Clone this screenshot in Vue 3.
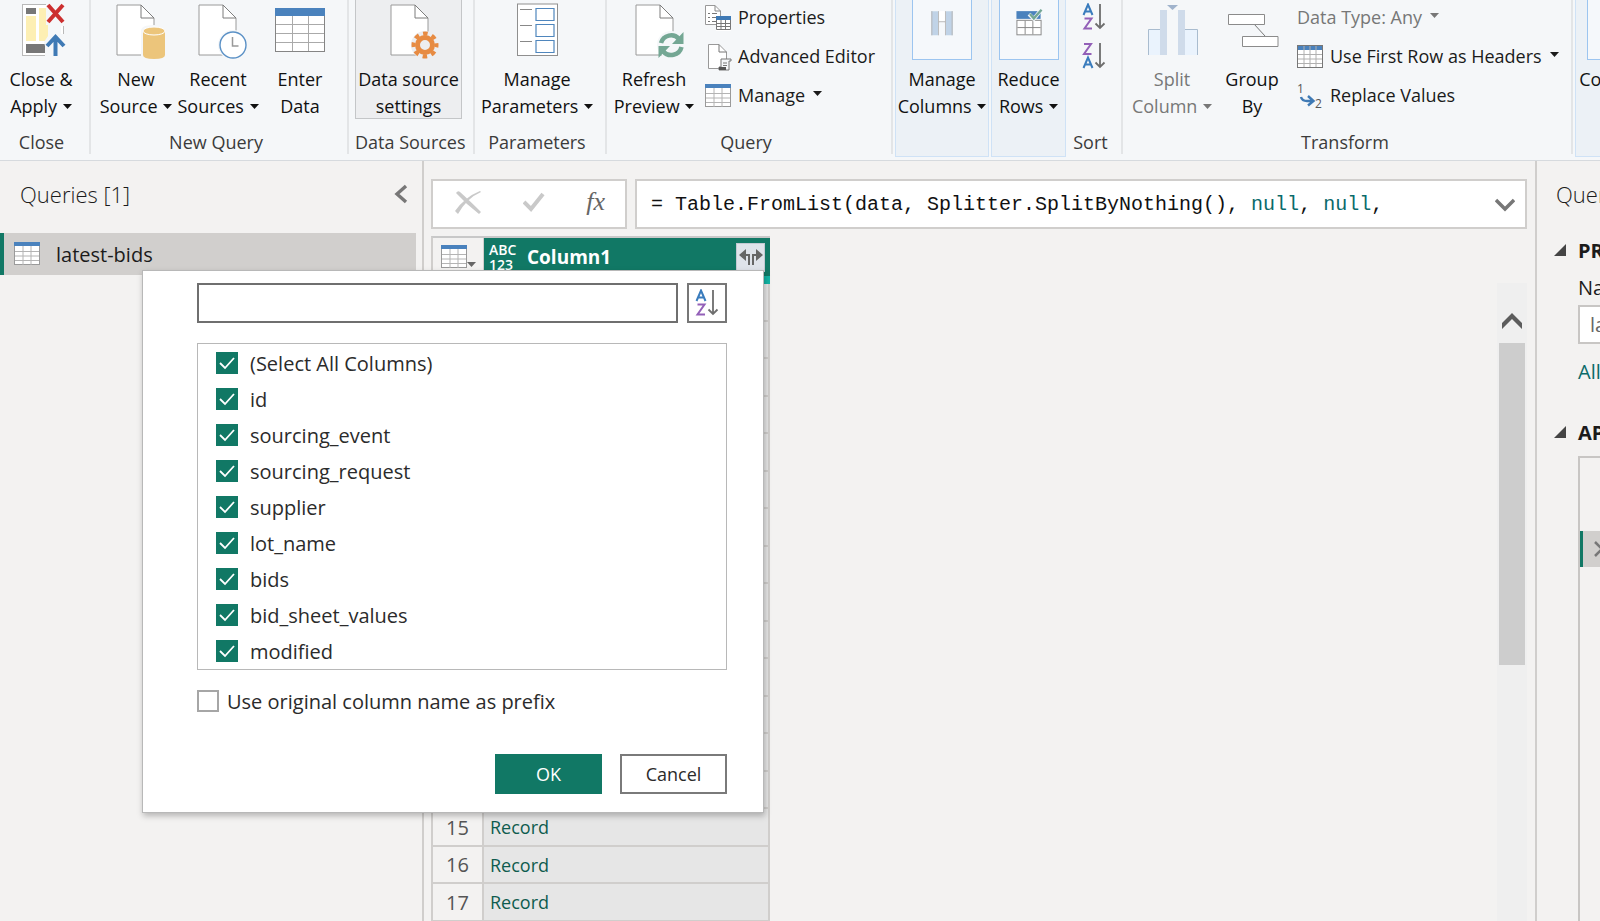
<script setup>
import { reactive, ref } from 'vue'

const columns = reactive([
  { name: '(Select All Columns)', on: true },
  { name: 'id', on: true },
  { name: 'sourcing_event', on: true },
  { name: 'sourcing_request', on: true },
  { name: 'supplier', on: true },
  { name: 'lot_name', on: true },
  { name: 'bids', on: true },
  { name: 'bid_sheet_values', on: true },
  { name: 'modified', on: true },
])
const search = ref('')
const prefix = ref(false)
const queryName = ref('latest-bids')
</script>

<template>
  <div class="app">
    <svg class="defs" aria-hidden="true">
      <symbol id="caret" viewBox="0 0 9 5"><path d="M0 0H9L4.5 5Z" fill="currentColor" /></symbol>
      <symbol id="doc" viewBox="0 0 40 52">
        <path d="M1 1H25L38 14V51H1Z" fill="#fff" stroke="#9a9a9a" />
        <path d="M25 1V14H38Z" fill="#fff" stroke="#7d7d7d" />
      </symbol>
      <symbol id="grid" viewBox="0 0 26 24">
        <rect x=".5" y=".5" width="25" height="22" fill="#fff" stroke="#9a9a9a" />
        <path d="M9 4V23M17 4V23M1 9.500H25M1 14H25M1 18.500H25" stroke="#b4b4b4" fill="none" />
        <rect width="26" height="4" fill="#4a82bd" />
      </symbol>
      <symbol id="az" viewBox="0 0 24 28">
        <path d="M1.500 12L6 1.500L10.500 12M3 8.500H9" fill="none" stroke="#3a7cbd" stroke-width="2" />
        <path d="M2.500 15.500H9.500L2.500 25.500H10" fill="none" stroke="#9360b8" stroke-width="2" />
        <path d="M18 1V25M13.500 20.500L18 25L22.500 20.500" fill="none" stroke="#6d6d6d" stroke-width="1.800" />
      </symbol>
      <symbol id="za" viewBox="0 0 24 28">
        <path d="M2 2H9L2 12H9.500" fill="none" stroke="#9360b8" stroke-width="2" />
        <path d="M1.500 26L6 15.500L10.500 26M3 22.500H9" fill="none" stroke="#3a7cbd" stroke-width="2" />
        <path d="M18 1V25M13.500 20.500L18 25L22.500 20.500" fill="none" stroke="#6d6d6d" stroke-width="1.800" />
      </symbol>
    </svg>

    <header class="ribbon">
      <section class="group g-close">
        <div class="tools">
          <button class="big">
            <svg class="icon" viewBox="0 0 60 60">
              <rect x="11.500" y="4.500" width="41" height="51" fill="#fff" stroke="#b9b9b9" />
              <rect x="15" y="8" width="10" height="6" fill="#777" />
              <rect x="15" y="16" width="10" height="25" fill="#fdefb3" />
              <rect x="28" y="8" width="20" height="33" fill="#fdefb3" />
              <rect x="15" y="44" width="19" height="9" fill="#777" />
              <path d="M35 0H58V26H50V34H56V60H34V46L33 42L37 36V25H35Z" fill="#f5f7f9" />
              <path d="M37 5L52 22M52 5L37 22" stroke="#cc2f2f" stroke-width="4" />
              <path d="M44.500 56V38M36 46L44.500 37L53 46" stroke="#3f7ab5" stroke-width="4" fill="none" />
            </svg>
            <span>Close &amp;<br />Apply <svg class="caret"><use href="#caret" /></svg></span>
          </button>
        </div>
        <h2>Close</h2>
      </section>

      <section class="group g-new">
        <div class="tools">
          <button class="big">
            <svg class="icon" viewBox="0 0 60 60">
              <use href="#doc" x="10" y="4" width="40" height="52" />
              <path d="M35 31Q35 25 48 25Q61 25 61 31V60H35Z" fill="#f5f7f9" />
              <path d="M37 31V55Q37 59 48 59Q59 59 59 55V31Z" fill="#ecc57b" />
              <ellipse cx="48" cy="31" rx="11" ry="4" fill="#ecc57b" stroke="#fff" />
            </svg>
            <span>New<br />Source <svg class="caret"><use href="#caret" /></svg></span>
          </button>
          <button class="big">
            <svg class="icon" viewBox="0 0 60 60">
              <use href="#doc" x="10" y="4" width="40" height="52" />
              <circle cx="45" cy="45" r="15" fill="#f5f7f9" />
              <circle cx="45" cy="45" r="13" fill="#fff" stroke="#5b91c6" stroke-width="1.400" />
              <path d="M44.500 37V46H50.500" fill="none" stroke="#999" stroke-width="1.500" />
            </svg>
            <span>Recent<br />Sources <svg class="caret"><use href="#caret" /></svg></span>
          </button>
          <button class="big">
            <svg class="icon" viewBox="0 0 60 60">
              <rect x="5.500" y="8.500" width="49" height="43" fill="#fff" stroke="#858585" />
              <path d="M22.500 16V51M38.500 16V51M6 24.500H54M6 33.500H54M6 42.500H54" stroke="#aaa" />
              <rect x="5" y="8" width="50" height="8" fill="#4a82bd" />
            </svg>
            <span>Enter<br />Data</span>
          </button>
        </div>
        <h2>New Query</h2>
      </section>

      <section class="group g-sources">
        <div class="tools">
          <button class="big active">
            <svg class="icon" viewBox="0 0 60 60">
              <use href="#doc" x="11" y="4" width="40" height="52" />
              <circle cx="46" cy="45" r="14" fill="#edeef0" />
              <circle cx="46" cy="45" r="7.500" fill="none" stroke="#e78b42" stroke-width="5" />
              <circle cx="46" cy="45" r="11.500" fill="none" stroke="#e78b42" stroke-width="4" stroke-dasharray="4.600 4.432" stroke-dashoffset="2.300" />
            </svg>
            <span>Data source<br />settings</span>
          </button>
        </div>
        <h2>Data Sources</h2>
      </section>

      <section class="group g-params">
        <div class="tools">
          <button class="big">
            <svg class="icon" viewBox="0 0 60 60">
              <rect x="10.500" y="4" width="40" height="51.500" fill="#fff" stroke="#8f8f8f" />
              <path d="M13 9.500H25M13 25.500H25M13 41.500H25" stroke="#888" />
              <path d="M29 8.500H47V20.500H29ZM29 24.500H47V36.500H29ZM29 40.500H47V52.500H29Z" fill="#fff" stroke="#4f86bd" stroke-width="1.200" />
            </svg>
            <span>Manage<br />Parameters <svg class="caret"><use href="#caret" /></svg></span>
          </button>
        </div>
        <h2>Parameters</h2>
      </section>

      <section class="group g-query">
        <div class="tools">
          <button class="big">
            <svg class="icon" viewBox="0 0 60 60">
              <use href="#doc" x="11" y="4" width="40" height="52" />
              <circle cx="47" cy="45" r="14" fill="#f5f7f9" />
              <path d="M37 43A10.500 10.500 0 0 1 55 39M57.500 47A10.500 10.500 0 0 1 39 51" fill="none" stroke="#74a794" stroke-width="4.500" />
              <path d="M59.500 32V44H48ZM34.500 58V46H46Z" fill="#74a794" />
            </svg>
            <span>Refresh<br />Preview <svg class="caret"><use href="#caret" /></svg></span>
          </button>
          <div class="stack">
            <button class="small">
              <svg class="mini" viewBox="0 0 26 26">
                <path d="M.5 .5H10L15.500 6V19.500H.5Z" fill="#fff" stroke="#999" />
                <path d="M10 .5V6H15.500" fill="none" stroke="#888" />
                <path d="M3 8.500H5M3 12.500H5M3 16.500H5M7 8.500H12M7 12.500H11M7 16.500H11" stroke="#777" />
                <rect x="11" y="11" width="15" height="15" fill="#fff" />
                <path d="M11.500 12V24.500H25.500V12M16 15V24M20.500 15V24M12 18.500H25M12 21.500H25" fill="none" stroke="#777" />
                <rect x="11" y="11" width="15" height="4" fill="#3f7ab5" />
              </svg>
              Properties
            </button>
            <button class="small">
              <svg class="mini" viewBox="0 0 26 26">
                <path d="M3.500 .5H14L21.500 8V24.500H3.500Z" fill="#fff" stroke="#999" />
                <path d="M14 .5V8H21.500" fill="none" stroke="#777" />
                <path d="M16 15H26V17H24V26H14V23H16Z" fill="#f5f7f9" stroke="#777" />
                <path d="M18 19H22M18 21.500H22" stroke="#777" />
                <path d="M14 24.500H21" stroke="#555" stroke-width="3" />
              </svg>
              Advanced Editor
            </button>
            <button class="small">
              <svg class="mini" viewBox="0 0 26 24"><use href="#grid" /></svg>
              Manage <svg class="caret"><use href="#caret" /></svg>
            </button>
          </div>
        </div>
        <h2>Query</h2>
      </section>

      <section class="folded f-columns">
        <button class="big">
          <svg class="icon framed" viewBox="0 0 60 60">
            <path d="M19 11H26V36H19ZM34 11H41V36H34Z" fill="#c0d3e7" />
            <path d="M19.500 11V36M40.500 11V36M26.500 36V11M33.500 36V11M26.500 22H33.500" fill="none" stroke="#b3b3b3" />
            <path d="M27 11H33V21H27Z" fill="#fff" />
            <path d="M27 23H33V37H27Z" fill="#f5f8fb" />
          </svg>
          <span>Manage<br />Columns <svg class="caret"><use href="#caret" /></svg></span>
        </button>
      </section>
      <section class="folded f-rows">
        <button class="big">
          <svg class="icon framed" viewBox="0 0 60 60">
            <rect x="17.500" y="20.500" width="25" height="15" fill="#fff" stroke="#888" />
            <path d="M26 21V35M34 21V35M18 28H42" stroke="#888" />
            <rect x="17" y="11" width="25" height="8" fill="#4a82bd" />
            <path d="M30 14L35 19L43 9" fill="none" stroke="#f1f5f9" stroke-width="4" />
            <path d="M31 14L35 18.500L43 9.500" fill="none" stroke="#74a794" stroke-width="2.400" />
          </svg>
          <span>Reduce<br />Rows <svg class="caret"><use href="#caret" /></svg></span>
        </button>
      </section>

      <section class="group g-sort">
        <div class="tools sorts">
          <button aria-label="Sort ascending"><svg class="az"><use href="#az" /></svg></button>
          <button aria-label="Sort descending"><svg class="az"><use href="#za" /></svg></button>
        </div>
        <h2>Sort</h2>
      </section>

      <section class="group g-transform">
        <div class="tools">
          <button class="big muted">
            <svg class="icon" viewBox="0 0 60 60">
              <path d="M6.500 55V29.500H18V55ZM43 55V29.500H55.500V55Z" fill="#eaf3fd" />
              <path d="M6.500 55V29.500H18M43 29.500H55.500V55" fill="none" stroke="#a9bccf" />
              <path d="M18 10H25V55H18ZM36 10H43V55H36Z" fill="#cfdbea" />
              <path d="M25 5H36L30.500 10Z" fill="#a0b3cc" />
            </svg>
            <span>Split<br />Column <svg class="caret"><use href="#caret" /></svg></span>
          </button>
          <button class="big group-by">
            <svg class="icon" viewBox="0 0 60 60">
              <path d="M32 24L43 36" stroke="#777" />
              <path d="M6.500 14.500H42.500V24.500H6.500ZM20.500 36.500H56V46.500H20.500Z" fill="#fff" stroke="#8b8b8b" />
            </svg>
            <span>Group<br />By</span>
          </button>
          <div class="stack">
            <button class="small muted">Data Type: Any <svg class="caret"><use href="#caret" /></svg></button>
            <button class="small">
              <svg class="mini" viewBox="0 0 26 24">
                <rect x=".5" y=".5" width="25" height="22" fill="#fff" stroke="#777" />
                <rect x="1" y="1" width="24" height="4" fill="#4a82bd" />
                <path d="M7 1V22M13 1V22M19 1V22M1 9.500H25M1 14H25M1 18.500H25" stroke="#b0b0b0" />
              </svg>
              Use First Row as Headers <svg class="caret"><use href="#caret" /></svg>
            </button>
            <button class="small">
              <svg class="mini" viewBox="0 0 26 26">
                <text x="0" y="10" class="digit">1</text>
                <text x="18" y="25" class="digit">2</text>
                <path d="M4 14Q5 18 10 18H15M11 13L16.500 18L11 22.500" fill="none" stroke="#3f7ab5" stroke-width="2.400" />
              </svg>
              Replace Values
            </button>
          </div>
        </div>
        <h2>Transform</h2>
      </section>

      <section class="folded f-combine">
        <button class="big">
          <svg class="icon framed" viewBox="0 0 60 60" />
          <span>Combine</span>
        </button>
      </section>
    </header>

    <main class="body">
      <aside class="queries">
        <div class="pane-title">
          <h1>Queries [1]</h1>
          <button aria-label="Collapse queries">
            <svg width="14" height="20" viewBox="0 0 14 20"><path d="M12 2L3 10L12 18" fill="none" stroke="#777" stroke-width="3.400" /></svg>
          </button>
        </div>
        <a class="query" href="#latest-bids">
          <svg class="mini" viewBox="0 0 26 24"><use href="#grid" /></svg>
          latest-bids
        </a>
      </aside>

      <section class="editor">
        <div class="formula-bar">
          <div class="formula-actions">
            <button aria-label="Cancel formula">
              <svg width="26" height="24" viewBox="0 0 26 24"><path d="M1 3Q3 0 5 2Q14 10 26 22L24 24Q12 15 1 3ZM26 2Q12 8 3 24L0 21Q10 7 25 1Z" fill="#c9c9c9" /></svg>
            </button>
            <button aria-label="Apply formula">
              <svg width="22" height="20" viewBox="0 0 22 20"><path d="M1 10L8 17L20 2" fill="none" stroke="#c9c9c9" stroke-width="4" /></svg>
            </button>
            <button class="fx">fx</button>
          </div>
          <div class="formula">
            <code>= Table.FromList(data, Splitter.SplitByNothing(), <b>null</b>, <b>null</b>,</code>
            <button aria-label="Expand formula bar">
              <svg width="20" height="14" viewBox="0 0 20 14"><path d="M1 2L10 11L19 2" fill="none" stroke="#777" stroke-width="3.400" /></svg>
            </button>
          </div>
        </div>

        <div class="preview">
          <table>
            <thead>
              <tr>
                <th class="corner">
                  <button aria-label="Table options">
                    <svg class="mini" viewBox="0 0 26 24"><use href="#grid" /></svg>
                    <svg class="caret"><use href="#caret" /></svg>
                  </button>
                </th>
                <th class="column">
                  <div class="column-head">
                    <span class="type">ABC<br />123</span>
                    <span class="name">Column1</span>
                    <button aria-label="Expand column">
                      <svg width="24" height="18" viewBox="0 0 24 18">
                        <path d="M0 7L7 1V6H11V17H9V8H7V13ZM24 7L17 1V6H13V17H15V8H17V13Z" fill="#666" />
                      </svg>
                    </button>
                  </div>
                </th>
              </tr>
              <tr class="quality"><th></th><th></th></tr>
            </thead>
            <tbody>
              <tr v-for="n in 17" :key="n">
                <th>{{ n }}</th>
                <td><a href="#record">Record</a></td>
              </tr>
            </tbody>
          </table>
          <div class="scrollbar">
            <button aria-label="Scroll up">
              <svg width="20" height="16" viewBox="0 0 20 16"><path d="M0 16V10L10 0L20 10V16L10 6Z" fill="#5c5c5c" /></svg>
            </button>
            <div class="thumb"></div>
          </div>
        </div>
      </section>

      <aside class="settings">
        <h1>Query Settings</h1>
        <h3><svg width="12" height="12" viewBox="0 0 12 12"><path d="M12 0V12H0Z" fill="#444" /></svg>PROPERTIES</h3>
        <div class="fields">
          <label for="query-name">Name</label>
          <input id="query-name" v-model="queryName" type="text" />
          <a href="#properties">All Properties</a>
        </div>
        <h3><svg width="12" height="12" viewBox="0 0 12 12"><path d="M12 0V12H0Z" fill="#444" /></svg>APPLIED STEPS</h3>
        <div class="steps">
          <div class="step">
            <button aria-label="Delete step">
              <svg width="16" height="16" viewBox="0 0 16 16"><path d="M1 1L15 15M15 1L1 15" stroke="#777" stroke-width="2.500" /></svg>
            </button>
          </div>
        </div>
      </aside>
    </main>

    <form class="dialog" role="dialog" aria-label="Expand Column1" @submit.prevent>
      <div class="search">
        <input v-model="search" type="text" aria-label="Search columns to expand" />
        <button type="button" aria-label="Sort columns"><svg class="az"><use href="#az" /></svg></button>
      </div>
      <div class="choices">
        <label v-for="c in columns" :key="c.name">
          <span class="box">
            <input v-model="c.on" type="checkbox" />
            <svg v-if="c.on" viewBox="0 0 22 22"><path d="M4 11L9 16L18 6" fill="none" stroke="#fff" stroke-width="1.800" /></svg>
          </span>
          {{ c.name }}
        </label>
      </div>
      <label class="prefix">
        <span class="box"><input v-model="prefix" type="checkbox" /></span>
        Use original column name as prefix
      </label>
      <div class="actions">
        <button type="submit" class="primary">OK</button>
        <button type="button">Cancel</button>
      </div>
    </form>
  </div>
</template>

<style>
html, body { overflow: hidden; }
</style>

<style scoped>
* { box-sizing: border-box; }
.app {
  position: relative;
  display: flex;
  flex-direction: column;
  height: 100vh;
  overflow: hidden;
  background: #f3f2f1;
  color: #1b1b1b;
  font: 20px/27px "Open Sans", "Noto Sans", sans-serif;
}
.defs { position: absolute; width: 0; height: 0; }
button { border: 0; background: none; padding: 0; margin: 0; font: inherit; color: inherit; }
h1, h2, h3 { margin: 0; font-weight: 400; font-size: inherit; white-space: nowrap; }
.caret { width: 9px; height: 5px; vertical-align: middle; margin: 0 0 4px 1px; }
.mini { width: 26px; height: 26px; flex: none; overflow: visible; }
.az { width: 24px; height: 28px; display: block; }

/* Ribbon */
.ribbon {
  display: flex;
  flex: none;
  height: 161px;
  overflow: hidden;
  background: #f5f7f9;
  border-bottom: 1px solid #d6dade;
  font-size: 18px;
}
.group {
  flex: none;
  display: flex;
  flex-direction: column;
  height: 154px;
  border-right: 2px solid #e3e5e7;
}
.group h2 { padding-right: 6px; text-align: center; color: #3b3b3b; }
.tools { display: flex; flex: none; height: 129px; }
.big {
  flex: none;
  width: 82px;
  height: 119px;
  display: flex;
  flex-direction: column;
  align-items: center;
  gap: 6px;
  white-space: nowrap;
  text-align: center;
  color: #111;
}
.icon { width: 60px; height: 60px; flex: none; overflow: visible; }
.muted { color: #777; }
.active { background: #edeef0; border: 1px solid #c4c6c8; border-top: 0; }
.g-close { width: 91px; }
.g-new { width: 258px; padding: 0 4px; }
.g-sources { width: 126px; padding: 0 10px 0 6px; }
.g-sources .big { width: 107px; }
.g-sources h2 { padding-right: 0; }
.g-params { width: 132px; }
.g-params .big { width: 124px; }
.g-query { width: 286px; padding: 0 6px; }
.g-query .stack { margin-left: 10px; }
.g-sort { width: 57px; }
.g-transform { width: 450px; padding: 0 6px 0 8px; }
.g-transform .stack { margin-left: 6px; }
.group-by { width: 78px; }
.stack { display: flex; flex-direction: column; margin-top: -2px; align-items: flex-start; }
.small { display: flex; align-items: center; gap: 7px; height: 39px; white-space: nowrap; }
.digit { font-size: 12px; fill: #555; }
.folded {
  flex: none;
  height: 157px;
  margin-left: 2px;
  background: #ecf1f6;
  border: 1px solid #cfe2f6;
  border-top: 0;
}
.folded .big { width: 100%; }
.framed { background: #f5f8fb; border: 1px solid #9cc5f0; border-top: 0; }
.f-columns { width: 94px; }
.f-rows { width: 75px; }
.f-combine { width: 84px; }
.sorts { flex-direction: column; align-items: center; gap: 11px; padding-top: 3px; }

/* Queries pane */
.body { flex: 1; display: flex; min-height: 0; }
.queries { flex: 0 0 424px; border-right: 2px solid #d0cecc; }
.pane-title { display: flex; align-items: center; justify-content: space-between; height: 72px; padding: 0 14px 6px 20px; }
.pane-title h1, .settings h1 { font-size: 22px; font-weight: 300; }
.pane-title button svg { display: block; }
.query {
  display: flex;
  align-items: center;
  gap: 16px;
  height: 42px;
  margin-right: 6px;
  padding-left: 10px;
  border-left: 4px solid #117865;
  background: #d1cfcd;
  color: #1b1b1b;
  text-decoration: none;
}

/* Editor */
.editor { flex: 1; min-width: 0; display: flex; flex-direction: column; padding: 18px 8px 0 7px; gap: 7px; }
.formula-bar { flex: none; display: flex; gap: 8px; height: 50px; }
.formula-actions, .formula { display: flex; align-items: center; background: #fff; border: 2px solid #d0cecc; }
.formula-actions { width: 196px; padding: 0 20px 4px 22px; justify-content: space-between; }
.formula-actions svg { display: block; }
.fx { font: italic 26px/30px "Liberation Serif", serif; color: #666; }
.formula { flex: 1; min-width: 0; justify-content: space-between; padding: 0 10px 0 14px; }
.formula code { font: 20px/27px "Liberation Mono", monospace; color: #111; white-space: nowrap; }
.formula b { font-weight: 400; color: #0b6a6a; }
.preview { flex: 1; min-height: 0; display: flex; justify-content: space-between; overflow: hidden; }
table { width: 339px; border-collapse: separate; border-spacing: 0; table-layout: fixed; align-self: flex-start; border-left: 2px solid #d0cecc; border-top: 2px solid #c8c8c8; }
th, td { padding: 0; font-weight: 400; }
.corner { width: 51px; height: 38px; border-right: 1px solid #d0cecc; }
.corner button { display: flex; align-items: flex-end; padding-left: 8px; color: #666; }
.corner .caret { margin: 0 0 3px; }
.column { background: #117865; color: #fff; }
.column-head { display: flex; align-items: center; height: 38px; padding: 0 5px; }
.type { font-size: 14px; line-height: 15px; width: 38px; text-align: left; font-weight: 600; }
.name { flex: 1; text-align: left; font-size: 19px; font-weight: 700; }
.column-head button { display: grid; place-items: center; width: 29px; height: 29px; background: #dfe3ea; border: 1px solid #c3c9d2; }
.quality th { height: 8px; }
.quality th:last-child { background: #12b5a5; }
tbody th { border-right: 2px solid #d0cecc; color: #555; }
tbody th, tbody td { height: 38px; border-bottom: 2px solid #d0cecc; }
tbody tr:nth-child(even) th, tbody tr:nth-child(even) td { height: 37px; }
tbody td { background: #e6e6e6; padding-left: 6px; border-right: 2px solid #d0cecc; }
td a { font-size: 18px; color: #0f5c4e; text-decoration: none; }
.scrollbar { width: 30px; margin-top: 47px; padding: 30px 2px 0; background: #efefef; }
.scrollbar button { display: grid; place-items: start center; width: 100%; height: 30px; }
.thumb { height: 322px; background: #cdcdcd; }

/* Settings pane */
.settings { flex: 0 0 65px; display: flex; flex-direction: column; overflow: hidden; border-left: 2px solid #d0cecc; padding: 20px 0 0 17px; }
.settings h1 { padding-left: 2px; }
.settings h3 { display: flex; align-items: center; gap: 12px; margin-top: 29px; font-weight: 700; }
.settings h3 svg { flex: none; margin-bottom: 2px; }
.fields { display: flex; flex-direction: column; width: 240px; padding: 10px 0 0 24px; }
.fields input { height: 39px; margin: 4px 0 14px; padding: 0 10px; border: 2px solid #c8c6c4; background: #fff; font: inherit; color: #666; }
.fields a { color: #0b6a6a; text-decoration: none; }
.fields + h3 { margin-top: 34px; }
.steps { flex: 1; width: 240px; margin: 10px 0 0 24px; padding-top: 73px; border: 2px solid #c8c6c4; border-bottom: 0; }
.step { display: flex; align-items: center; height: 36px; padding-left: 11px; border-left: 3px solid #117865; background: #d1cfcd; }
.step svg { display: block; }

/* Expand dialog */
.dialog {
  position: absolute;
  left: 142px;
  top: 270px;
  width: 622px;
  padding: 12px 36px 18px 54px;
  background: #fff;
  border: 1px solid #b8b8b8;
  box-shadow: 1px 3px 6px rgba(0, 0, 0, .25);
}
.search { display: flex; gap: 9px; height: 40px; }
.search input { flex: 1; min-width: 0; border: 2px solid #6f6f6f; padding: 0 8px; font: inherit; }
.search button { width: 40px; border: 2px solid #777; display: grid; place-items: center; }
.choices { margin-top: 20px; padding: 1px 18px 0; border: 1px solid #b8b8b8; }
.dialog label { display: flex; align-items: center; gap: 12px; height: 36px; white-space: nowrap; color: #2b2b2b; }
.box { position: relative; display: block; width: 22px; height: 22px; }
.box input { appearance: none; display: block; width: 22px; height: 22px; margin: 0; border: 2px solid #a6a6a6; background: #fff; }
.box input:checked { background: #117865; border-color: #117865; }
.box svg { position: absolute; inset: 0; pointer-events: none; }
.dialog .prefix { gap: 8px; margin-top: 13px; }
.actions { display: flex; justify-content: flex-end; gap: 18px; margin-top: 35px; }
.actions button { width: 107px; height: 40px; font-size: 18px; border: 2px solid #7a7a7a; color: #2b2b2b; }
.actions .primary { background: #117865; border-color: #117865; color: #fff; }
</style>
